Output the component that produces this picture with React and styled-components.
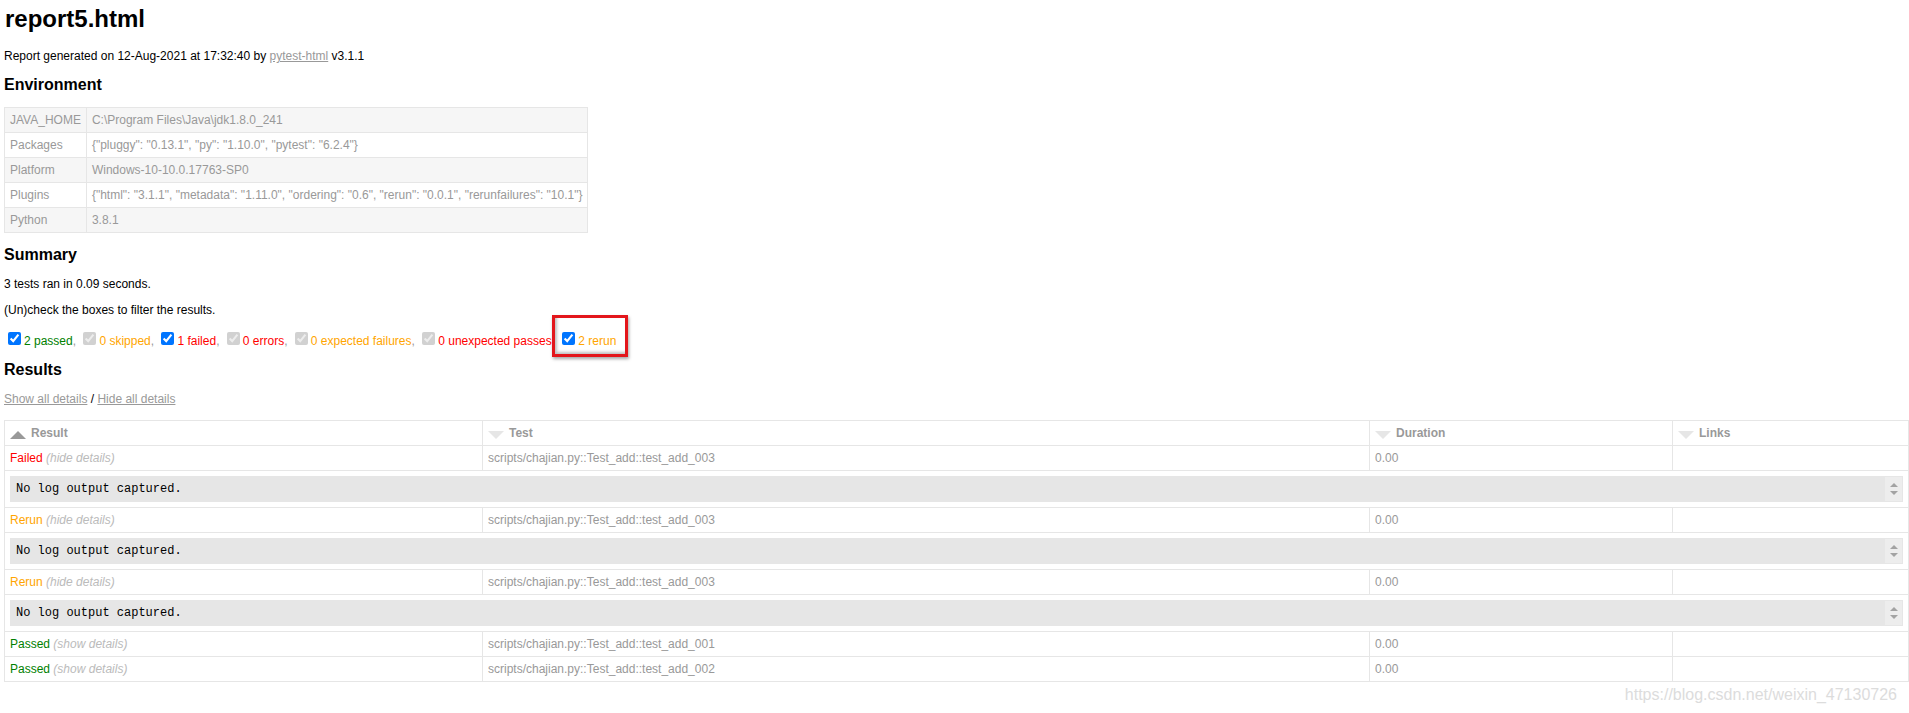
import React from 'react';
import styled, { createGlobalStyle } from 'styled-components';

const GlobalStyle = createGlobalStyle`
  body {
    margin: 0;
    background: #fff;
    font-family: "Liberation Sans", Helvetica, Arial, sans-serif;
    font-size: 12px;
    color: #999;
  }
`;

const Page = styled.div`
  padding: 0 1px 0 4px;
`;

const Title = styled.h1`
  font-size: 24px;
  color: black;
  margin: 5px 0 16px 1px;
`;

const Para = styled.p`
  color: black;
  margin: 12px 0 ${(p) => (p.$spaced ? '14px' : '12px')};
`;

const Heading = styled.h2`
  font-size: 16px;
  color: black;
  margin: 13px 0;
`;

const GrayLink = styled.a`
  color: #999;
`;

const EnvTable = styled.table`
  border-collapse: collapse;
`;

const EnvRow = styled.tr`
  &:nth-child(odd) {
    background-color: #f6f6f6;
  }
`;

const EnvCell = styled.td`
  padding: 5px;
  border: 1px solid #e6e6e6;
`;

const FilterLine = styled.div`
  color: #999;
`;

const Check = styled.input`
  margin: 3px 3px 3px 4px;
`;

const Outcome = styled.span`
  color: ${(p) => p.$color};
`;

const Highlight = styled.span`
  position: relative;

  &::after {
    content: "";
    position: absolute;
    left: -6px;
    right: -12px;
    top: -19px;
    bottom: -9px;
    border: 3px solid #e3161b;
    box-shadow: 1px 2px 3px rgba(0, 0, 0, 0.35), inset 2px -2px 3px rgba(0, 0, 0, 0.25);
  }
`;

const ResultsTable = styled.table`
  border-collapse: collapse;
  border: 1px solid #e6e6e6;
  table-layout: fixed;
  width: 100%;
  color: #999;
  font-size: 12px;
`;

const HeadCell = styled.th`
  padding: 5px;
  border: 1px solid #e6e6e6;
  text-align: left;
  font-weight: bold;
`;

const SortIcon = styled.span`
  float: left;
  width: 0;
  height: 0;
  margin: 5px 5px 0 0;
  border-left: 8px solid transparent;
  border-right: 8px solid transparent;
  ${(p) =>
    p.$active
      ? 'border-bottom: 8px solid #999;'
      : 'border-top: 8px solid #e6e6e6;'}
`;

const Cell = styled.td`
  padding: 5px;
  height: 14px;
  border: 1px solid #e6e6e6;
  text-align: left;
`;

const ResultName = styled.span`
  color: ${(p) => p.$color};
`;

const Toggle = styled.span`
  color: #bbb;
  font-style: italic;
`;

const LogBox = styled.div`
  display: flex;
  background-color: #e6e6e6;
  border: 1px solid #e6e6e6;
`;

const LogText = styled.div`
  flex: 1;
  padding: 5px;
  color: black;
  font-family: "Liberation Mono", "Courier New", Courier, monospace;
  font-size: 12px;
  white-space: pre-wrap;
`;

const ScrollTrack = styled.div`
  width: 17px;
  background: #ededed;
  display: flex;
  flex-direction: column;
  align-items: center;
  justify-content: center;
  gap: 4px;
`;

const Arrow = styled.span`
  width: 0;
  height: 0;
  border-left: 4px solid transparent;
  border-right: 4px solid transparent;
  ${(p) =>
    p.$up ? 'border-bottom: 4px solid #a3a3a3;' : 'border-top: 4px solid #a3a3a3;'}
`;

const Watermark = styled.div`
  text-align: right;
  padding: 4px 11px 0 0;
  font-size: 16px;
  color: #dcdcdc;
`;

const COLORS = { green: 'green', orange: 'orange', red: 'red' };

const environment = [
  ['JAVA_HOME', 'C:\\Program Files\\Java\\jdk1.8.0_241'],
  ['Packages', '{"pluggy": "0.13.1", "py": "1.10.0", "pytest": "6.2.4"}'],
  ['Platform', 'Windows-10-10.0.17763-SP0'],
  [
    'Plugins',
    '{"html": "3.1.1", "metadata": "1.11.0", "ordering": "0.6", "rerun": "0.0.1", "rerunfailures": "10.1"}',
  ],
  ['Python', '3.8.1'],
];

const filters = [
  { label: '2 passed', color: COLORS.green, enabled: true },
  { label: '0 skipped', color: COLORS.orange, enabled: false },
  { label: '1 failed', color: COLORS.red, enabled: true },
  { label: '0 errors', color: COLORS.red, enabled: false },
  { label: '0 expected failures', color: COLORS.orange, enabled: false },
  { label: '0 unexpected passes', color: COLORS.red, enabled: false },
  { label: '2 rerun', color: COLORS.orange, enabled: true, marked: true },
];

const results = [
  { name: 'Failed', color: COLORS.red, test: 'test_add_003', open: true },
  { name: 'Rerun', color: COLORS.orange, test: 'test_add_003', open: true },
  { name: 'Rerun', color: COLORS.orange, test: 'test_add_003', open: true },
  { name: 'Passed', color: COLORS.green, test: 'test_add_001', open: false },
  { name: 'Passed', color: COLORS.green, test: 'test_add_002', open: false },
];

const columns = [
  { title: 'Result', width: 478, active: true },
  { title: 'Test', width: 887 },
  { title: 'Duration', width: 303 },
  { title: 'Links', width: 236 },
];

function Filter({ item, last }) {
  const box = (
    <>
      <Check type="checkbox" defaultChecked disabled={!item.enabled} />
      <Outcome $color={item.color}>{item.label}</Outcome>
    </>
  );
  return (
    <>
      {item.marked ? <Highlight>{box}</Highlight> : box}
      {!last && ', '}
    </>
  );
}

function ResultRows({ row }) {
  return (
    <tbody>
      <tr>
        <Cell>
          <ResultName $color={row.color}>{row.name}</ResultName>
          <Toggle>{row.open ? ' (hide details)' : ' (show details)'}</Toggle>
        </Cell>
        <Cell>scripts/chajian.py::Test_add::{row.test}</Cell>
        <Cell>0.00</Cell>
        <Cell />
      </tr>
      {row.open && (
        <tr>
          <Cell colSpan={4}>
            <LogBox>
              <LogText>No log output captured.</LogText>
              <ScrollTrack>
                <Arrow $up />
                <Arrow />
              </ScrollTrack>
            </LogBox>
          </Cell>
        </tr>
      )}
    </tbody>
  );
}

export default function App() {
  return (
    <Page>
      <GlobalStyle />
      <Title>report5.html</Title>
      <Para>
        Report generated on 12-Aug-2021 at 17:32:40 by <GrayLink href="#">pytest-html</GrayLink> v3.1.1
      </Para>

      <Heading>Environment</Heading>
      <EnvTable>
        <tbody>
          {environment.map(([key, value]) => (
            <EnvRow key={key}>
              <EnvCell>{key}</EnvCell>
              <EnvCell>{value}</EnvCell>
            </EnvRow>
          ))}
        </tbody>
      </EnvTable>

      <Heading>Summary</Heading>
      <Para>3 tests ran in 0.09 seconds. </Para>
      <Para>(Un)check the boxes to filter the results.</Para>
      <FilterLine>
        {filters.map((item, i) => (
          <Filter key={item.label} item={item} last={i === filters.length - 1} />
        ))}
      </FilterLine>

      <Heading>Results</Heading>
      <Para $spaced>
        <GrayLink href="#">Show all details</GrayLink> / <GrayLink href="#">Hide all details</GrayLink>
      </Para>
      <ResultsTable>
        <colgroup>
          {columns.map((c) => (
            <col key={c.title} style={{ width: c.width }} />
          ))}
        </colgroup>
        <thead>
          <tr>
            {columns.map((c) => (
              <HeadCell key={c.title}>
                <SortIcon $active={c.active} />
                {c.title}
              </HeadCell>
            ))}
          </tr>
        </thead>
        {results.map((row, i) => (
          <ResultRows key={i} row={row} />
        ))}
      </ResultsTable>
      <Watermark>https://blog.csdn.net/weixin_47130726</Watermark>
    </Page>
  );
}
